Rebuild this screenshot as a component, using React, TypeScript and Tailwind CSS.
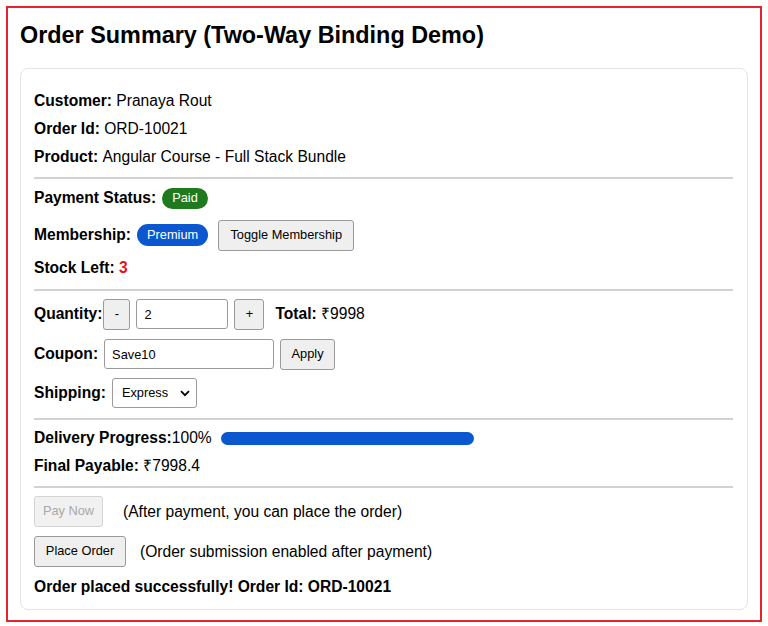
import { useState } from "react";

// Small pieces: native-looking buttons and inputs
function Btn({
  children,
  className = "",
  disabled = false,
}: {
  children: React.ReactNode;
  className?: string;
  disabled?: boolean;
}) {
  return (
    <button
      disabled={disabled}
      className={`h-[31px] rounded-[3px] border border-[#9a9a9a] bg-[#efefef] text-[12.8px] leading-none ${
        disabled ? "border-[#d4d4d4] bg-[#f1f1f1] text-[#a8a8a8]" : "text-black"
      } ${className}`}
    >
      {children}
    </button>
  );
}

function Divider({ className = "" }: { className?: string }) {
  return <div className={`h-[2px] bg-[#d2d2d2] ${className}`} />;
}

export default function App() {
  const [qty] = useState(2);
  const [coupon, setCoupon] = useState("Save10");
  const [shipping, setShipping] = useState("Express");

  return (
    <div className="p-[6px] bg-white font-['Liberation_Sans',Arial,sans-serif] text-black">
      <div className="h-[616px] border-2 border-[#e8232c] px-3 pt-[13px]">
        <h1 className="text-[23.4px] font-bold leading-[28px]">
          Order Summary (Two-Way Binding Demo)
        </h1>

        <div className="mt-[19px] rounded-lg border border-[#e4e4e4] pl-[13px] pr-[14px] pt-[18px] pb-[12px] text-[15.6px]">
          {/* Basic info */}
          <div className="flex h-[28px] items-center">
            <b>Customer:</b>&nbsp;Pranaya Rout
          </div>
          <div className="flex h-[28px] items-center">
            <b>Order Id:</b>&nbsp;ORD-10021
          </div>
          <div className="flex h-[28px] items-center">
            <b>Product:</b>&nbsp;Angular Course - Full Stack Bundle
          </div>

          <Divider className="mt-[6px]" />

          {/* Status */}
          <div className="mt-[6px] flex h-[26px] items-center">
            <b>Payment Status:</b>
            <span className="ml-[6px] flex h-[21px] items-center rounded-full bg-[#1f7a1f] px-[10px] text-[12.8px] text-white">
              Paid
            </span>
          </div>
          <div className="mt-[9px] flex h-[30px] items-center">
            <b>Membership:</b>
            <span className="ml-[6px] flex h-[22px] items-center rounded-full bg-[#0b57d0] px-[10px] text-[12.8px] text-white">
              Premium
            </span>
            <Btn className="ml-[10px] h-[30px] w-[136px]">Toggle Membership</Btn>
          </div>
          <div className="mt-[6px] flex h-[24px] items-center">
            <b>Stock Left:</b>&nbsp;<b className="text-[#e3121b]">3</b>
          </div>

          <Divider className="mt-[9px]" />

          {/* Quantity / coupon / shipping */}
          <div className="mt-[8px] flex h-[30px] items-center">
            <b>Quantity:</b>
            <Btn className="ml-[1px] h-[30px] w-[27px]">-</Btn>
            <input
              value={qty}
              readOnly
              className="ml-[6px] h-[30px] w-[92px] rounded-[3px] border border-[#9a9a9a] px-[7px] text-[12.8px] outline-none"
            />
            <Btn className="ml-[6px] h-[30px] w-[30px]">+</Btn>
            <b className="ml-[11px]">Total:</b>&nbsp;₹9998
          </div>
          <div className="mt-[10px] flex h-[30px] items-center">
            <b>Coupon:</b>
            <input
              value={coupon}
              onChange={(e) => setCoupon(e.target.value)}
              className="ml-[6px] h-[30px] w-[170px] rounded-[3px] border border-[#9a9a9a] px-[7px] text-[12.8px] outline-none"
            />
            <Btn className="ml-[6px] h-[30px] w-[55px]">Apply</Btn>
          </div>
          <div className="mt-[9px] flex h-[30px] items-center">
            <b>Shipping:</b>
            <div className="relative ml-[6px]">
              <select
                value={shipping}
                onChange={(e) => setShipping(e.target.value)}
                className="h-[30px] w-[85px] appearance-none rounded-[3px] border border-[#9a9a9a] bg-white pl-[9px] text-[12.8px] outline-none"
              >
                <option>Standard</option>
                <option>Express</option>
              </select>
              <svg
                className="pointer-events-none absolute right-[7px] top-[12px]"
                width="10"
                height="7"
                viewBox="0 0 10 7"
                fill="none"
                stroke="black"
                strokeWidth="1.8"
              >
                <path d="M1 1.2l4 4 4-4" />
              </svg>
            </div>
          </div>

          <Divider className="mt-[10px]" />

          {/* Delivery */}
          <div className="mt-[8px] flex h-[20px] items-center">
            <b>Delivery Progress:</b>100%
            <div className="ml-[9px] h-[13px] w-[253px] rounded-full bg-[#0b57d0]" />
          </div>
          <div className="mt-[7px] flex h-[22px] items-center">
            <b>Final Payable:</b>&nbsp;₹7998.4
          </div>

          <Divider className="mt-[9px]" />

          {/* Actions */}
          <div className="mt-[8px] flex h-[31px] items-center">
            <Btn disabled className="w-[69px]">
              Pay Now
            </Btn>
            <span className="ml-[20px]">(After payment, you can place the order)</span>
          </div>
          <div className="mt-[9px] flex h-[31px] items-center">
            <Btn className="w-[92px]">Place Order</Btn>
            <span className="ml-[14px]">(Order submission enabled after payment)</span>
          </div>
          <div className="mt-[10px] flex h-[20px] items-center font-bold">
            Order placed successfully! Order Id: ORD-10021
          </div>
        </div>
      </div>
    </div>
  );
}
